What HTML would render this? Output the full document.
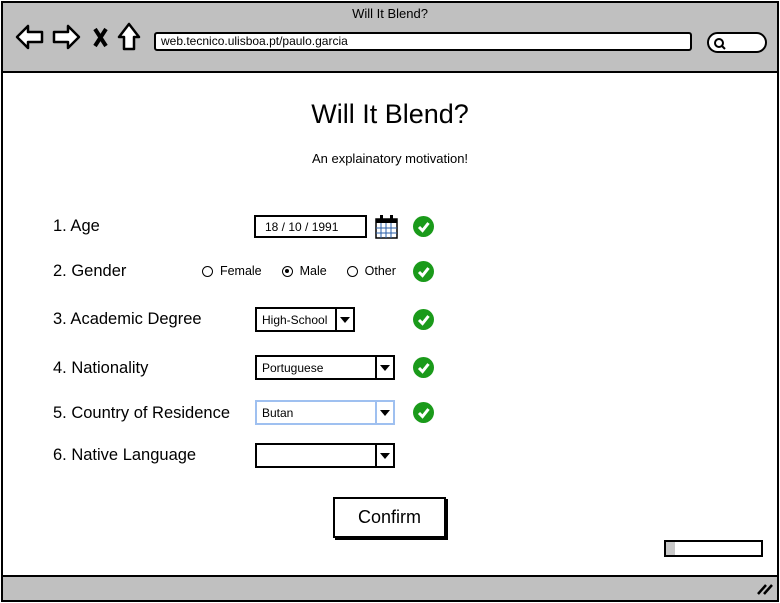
<!DOCTYPE html>
<html><head><meta charset="utf-8"><style>
*{margin:0;padding:0;box-sizing:border-box}
body{width:780px;height:603px;position:relative;background:#fff;font-family:"Liberation Sans",sans-serif;color:#000;overflow:hidden}
.abs{position:absolute}
.frame{left:1px;top:1px;width:778px;height:601px;border:2px solid #000;border-radius:2px}
.top{left:1px;top:1px;width:778px;height:72px;background:#c0c0c0;border:2px solid #000;border-bottom:2px solid #000}
.bot{left:1px;top:575px;width:778px;height:27px;background:#c0c0c0;border:2px solid #000}
.url{left:154px;top:32px;width:538px;height:19px;background:#fff;border:2px solid #000;border-radius:3px;font-size:12px;padding-left:5px;line-height:15px}
.search{left:707px;top:32px;width:60px;height:21px;background:#fff;border:2px solid #000;border-radius:11px}
.lbl{font-size:16.5px;left:53px}
.sel{height:25px;background:#fff;border:2px solid #000;font-size:12px;padding:4px 5px}
.sel .ar{position:absolute;right:0;top:0;width:18px;height:100%;border-left:2px solid #000}
.sel .ar:after{content:"";position:absolute;left:3px;top:8px;border-left:5px solid transparent;border-right:5px solid transparent;border-top:6px solid #000}
.chk{width:21px;height:21px;border-radius:50%;background:#1a9a1a;position:relative}
.chk svg{position:absolute;left:0;top:0}
.radio{width:11px;height:11px;border:1.5px solid #000;border-radius:50%;display:inline-block}
</style></head><body>
<div class="abs top"></div>
<div class="abs" style="left:0;top:6px;width:780px;text-align:center;font-size:13px">Will It Blend?</div>
<svg class="abs" style="left:14px;top:22px" width="130" height="30" viewBox="0 0 130 30">
<path d="M3 15 L14 4 L14 10 L28 10 L28 20 L14 20 L14 26 Z" fill="#fff" stroke="#000" stroke-width="2.5" stroke-linejoin="round"/>
<path d="M65 15 L54 4 L54 10 L40 10 L40 20 L54 20 L54 26 Z" fill="#fff" stroke="#000" stroke-width="2.5" stroke-linejoin="round"/>
<path d="M81 7 L92 24 M92 7 L81 24" stroke="#000" stroke-width="4"/>
<path d="M115 2 L105 15 L110 15 L110 27 L120 27 L120 15 L125 15 Z" fill="#fff" stroke="#000" stroke-width="2.5" stroke-linejoin="round"/>
</svg>
<div class="abs url">web.tecnico.ulisboa.pt/paulo.garcia</div>
<div class="abs search"><svg class="abs" style="left:4px;top:3px" width="14" height="14"><circle cx="6" cy="6" r="4" fill="none" stroke="#000" stroke-width="2"/><path d="M9 9 L12 12" stroke="#000" stroke-width="2"/></svg></div>
<div class="abs frame"></div>
<div class="abs bot"></div>
<svg class="abs" style="left:756px;top:582px" width="18" height="14"><path d="M2 12 L10 3 M8 12 L16 3" stroke="#000" stroke-width="2.5"/></svg>

<div class="abs" style="left:0;top:99px;width:780px;text-align:center;font-size:27px">Will It Blend?</div>
<div class="abs" style="left:0;top:151px;width:780px;text-align:center;font-size:13px">An explainatory motivation!</div>

<div class="abs lbl" style="top:217px">1. Age</div>
<div class="abs lbl" style="top:262px">2. Gender</div>
<div class="abs lbl" style="top:310px">3. Academic Degree</div>
<div class="abs lbl" style="top:359px">4. Nationality</div>
<div class="abs lbl" style="top:404px">5. Country of Residence</div>
<div class="abs lbl" style="top:446px">6. Native Language</div>

<div class="abs" style="left:254px;top:215px;width:113px;height:23px;border:2.5px solid #000;font-size:12px;padding:3px 9px">18 / 10 / 1991</div>
<svg class="abs" style="left:375px;top:214px" width="23" height="25" viewBox="0 0 23 25"><rect x="1" y="5" width="21" height="19" fill="#fff" stroke="#000" stroke-width="1.5"/><rect x="1" y="5" width="21" height="4" fill="#000"/><path d="M1 14H22M1 19H22M6 9V24M11 9V24M16 9V24" stroke="#2a5fa8" stroke-width="1"/><rect x="5" y="1" width="3" height="6" fill="#000"/><rect x="15" y="1" width="3" height="6" fill="#000"/></svg>

<div class="abs" style="left:202px;top:264px;font-size:12.5px;display:flex;align-items:center">
<span class="radio"></span>&nbsp; Female
<span style="display:inline-block;width:20px"></span>
<span class="radio" style="position:relative"><span style="position:absolute;left:2px;top:2px;width:4px;height:4px;border-radius:50%;background:#000"></span></span>&nbsp; Male
<span style="display:inline-block;width:20px"></span>
<span class="radio"></span>&nbsp; Other</div>

<div class="abs sel" style="left:255px;top:307px;width:100px">High-School<div class="ar"></div></div>
<div class="abs sel" style="left:255px;top:355px;width:140px">Portuguese<div class="ar"></div></div>
<div class="abs sel" style="left:255px;top:400px;width:140px;border-color:#9fc0f0">Butan<div class="ar" style="border-color:#9fc0f0"></div></div>
<div class="abs sel" style="left:255px;top:443px;width:140px"><div class="ar"></div></div>

<div class="abs" style="left:413px;top:216px"><div class="chk"><svg width="21" height="21"><path d="M6 11 L9.5 14.5 L15.5 7" fill="none" stroke="#fff" stroke-width="3"/></svg></div></div>
<div class="abs" style="left:413px;top:261px"><div class="chk"><svg width="21" height="21"><path d="M6 11 L9.5 14.5 L15.5 7" fill="none" stroke="#fff" stroke-width="3"/></svg></div></div>
<div class="abs" style="left:413px;top:309px"><div class="chk"><svg width="21" height="21"><path d="M6 11 L9.5 14.5 L15.5 7" fill="none" stroke="#fff" stroke-width="3"/></svg></div></div>
<div class="abs" style="left:413px;top:357px"><div class="chk"><svg width="21" height="21"><path d="M6 11 L9.5 14.5 L15.5 7" fill="none" stroke="#fff" stroke-width="3"/></svg></div></div>
<div class="abs" style="left:413px;top:402px"><div class="chk"><svg width="21" height="21"><path d="M6 11 L9.5 14.5 L15.5 7" fill="none" stroke="#fff" stroke-width="3"/></svg></div></div>

<div class="abs" style="left:333px;top:497px;width:113px;height:41px;border:2px solid #000;box-shadow:2px 2px 0 #000;font-size:18px;text-align:center;line-height:37px">Confirm</div>

<div class="abs" style="left:664px;top:540px;width:99px;height:17px;border:2px solid #000;background:#fff"><div style="width:9px;height:100%;background:#c8c8c8"></div></div>
</body></html>
